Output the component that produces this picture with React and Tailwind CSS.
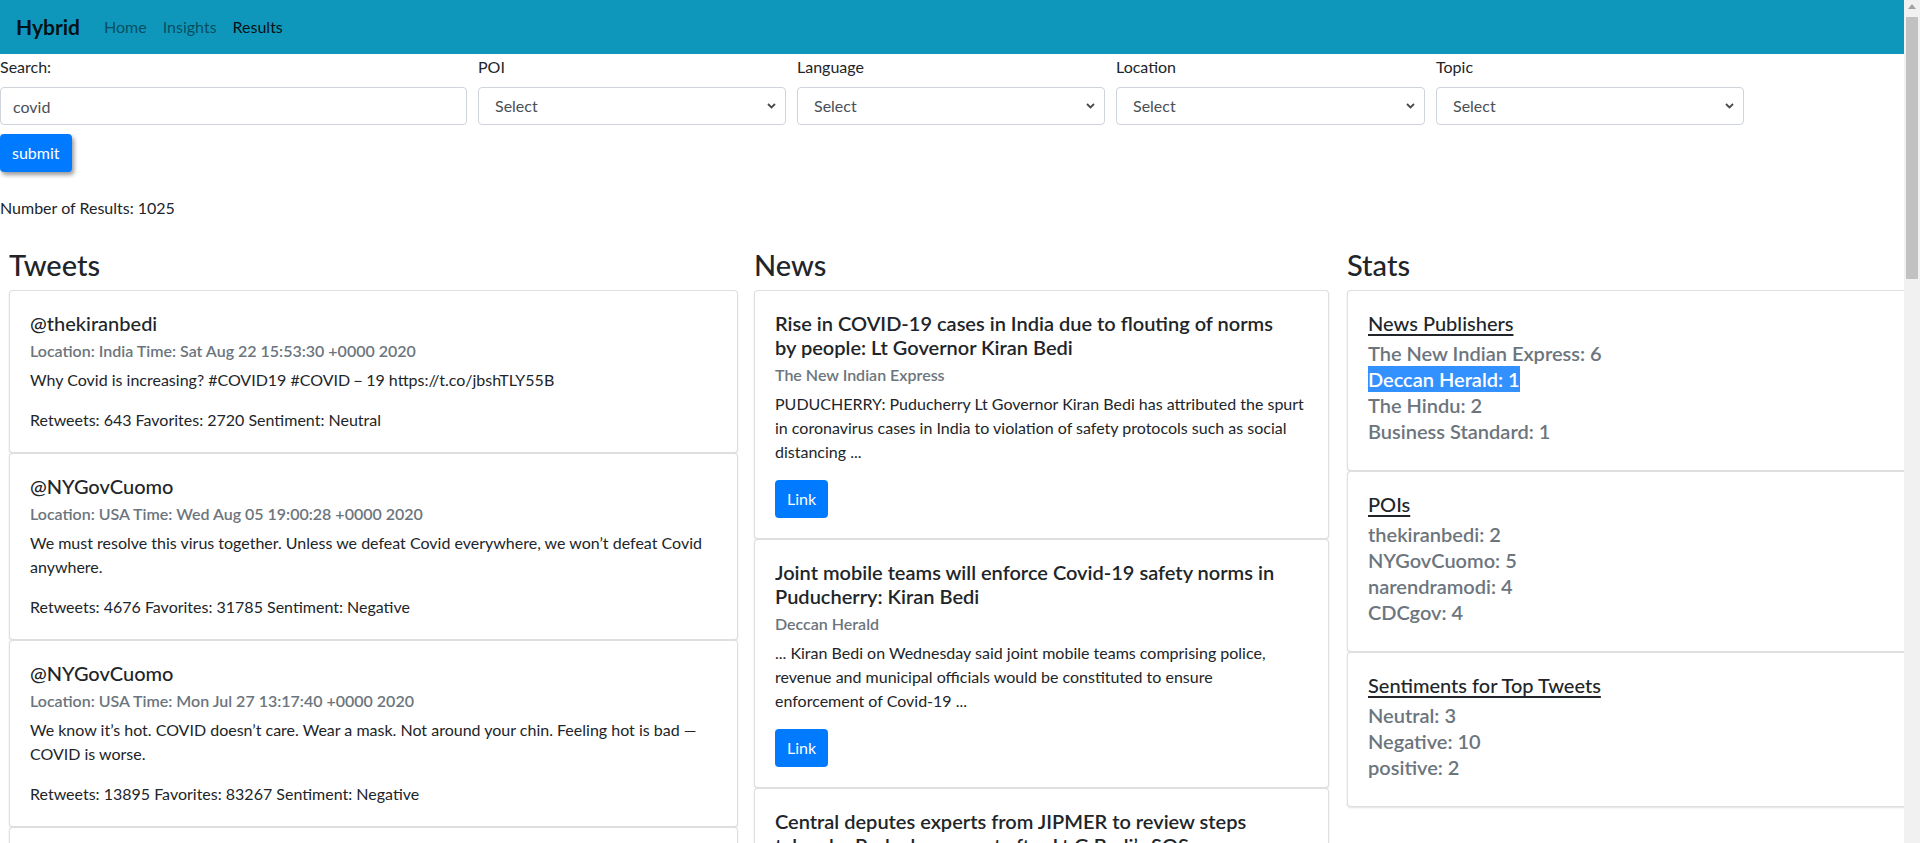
import React from 'react';

const tweets = [
  {
    user: '@thekiranbedi',
    meta: 'Location: India Time: Sat Aug 22 15:53:30 +0000 2020',
    lines: ['Why Covid is increasing? #COVID19 #COVID－19 https://t.co/jbshTLY55B'],
    stats: 'Retweets: 643 Favorites: 2720 Sentiment: Neutral',
  },
  {
    user: '@NYGovCuomo',
    meta: 'Location: USA Time: Wed Aug 05 19:00:28 +0000 2020',
    lines: ['We must resolve this virus together. Unless we defeat Covid everywhere, we won’t defeat Covid', 'anywhere.'],
    stats: 'Retweets: 4676 Favorites: 31785 Sentiment: Negative',
  },
  {
    user: '@NYGovCuomo',
    meta: 'Location: USA Time: Mon Jul 27 13:17:40 +0000 2020',
    lines: ['We know it’s hot. COVID doesn’t care. Wear a mask. Not around your chin. Feeling hot is bad —', 'COVID is worse.'],
    stats: 'Retweets: 13895 Favorites: 83267 Sentiment: Negative',
  },
  {
    user: '@narendramodi',
    meta: 'Location: India Time: Sun Aug 16 10:12:05 +0000 2020',
    lines: ['Stay safe, follow all the COVID-19 protocols.'],
    stats: 'Retweets: 5120 Favorites: 40211 Sentiment: positive',
  },
];

const news = [
  {
    title: ['Rise in COVID-19 cases in India due to flouting of norms', 'by people: Lt Governor Kiran Bedi'],
    source: 'The New Indian Express',
    body: [
      'PUDUCHERRY: Puducherry Lt Governor Kiran Bedi has attributed the spurt',
      'in coronavirus cases in India to violation of safety protocols such as social',
      'distancing ...',
    ],
  },
  {
    title: ['Joint mobile teams will enforce Covid-19 safety norms in', 'Puducherry: Kiran Bedi'],
    source: 'Deccan Herald',
    body: [
      '... Kiran Bedi on Wednesday said joint mobile teams comprising police,',
      'revenue and municipal officials would be constituted to ensure',
      'enforcement of Covid-19 ...',
    ],
  },
  {
    title: ['Central deputes experts from JIPMER to review steps', 'taken by Puducherry govt after Lt G Bedi’s SOS'],
    source: 'The Hindu',
    body: ['NEW DELHI: The Centre has deputed a team of experts from JIPMER to', 'review the measures taken to contain Covid-19 ...'],
  },
];

const stats = [
  {
    title: 'News Publishers',
    items: ['The New Indian Express: 6', 'Deccan Herald: 1', 'The Hindu: 2', 'Business Standard: 1'],
    selected: 1,
  },
  {
    title: 'POIs',
    items: ['thekiranbedi: 2', 'NYGovCuomo: 5', 'narendramodi: 4', 'CDCgov: 4'],
  },
  {
    title: 'Sentiments for Top Tweets',
    items: ['Neutral: 3', 'Negative: 10', 'positive: 2'],
  },
];

function Chevron() {
  return (
    <svg className="pointer-events-none absolute right-[10px] top-[16px]" width="9" height="6" viewBox="0 0 9 6">
      <path d="M1 1 L4.5 4.5 L8 1" fill="none" stroke="#4a4a4a" strokeWidth="1.8" />
    </svg>
  );
}

function SelectBox({ label, width }) {
  return (
    <div className={width}>
      <div className="h-[24px] leading-[24px] mb-2">{label}</div>
      <div className="relative">
        <select className="appearance-none w-full h-[38px] pl-4 pr-8 border border-[#ced4da] rounded-[4px] bg-white text-[#495057] outline-none">
          <option>Select</option>
        </select>
        <Chevron />
      </div>
    </div>
  );
}

function Card({ children, className = '' }) {
  return (
    <div className={`bg-white border border-[rgba(0,0,0,0.125)] rounded-[4px] shadow-[0_1px_2px_rgba(0,0,0,0.12)] ${className}`}>
      {children}
    </div>
  );
}

export default function App() {
  return (
    <div className="flex h-[843px] overflow-hidden bg-white text-[#212529] text-[16px] font-['Lato',sans-serif]">
      <div className="flex-1 min-w-0 overflow-hidden">
        {/* Navbar */}
        <nav className="h-[54px] bg-[#0e97bb] flex items-center px-4">
          <span className="text-[21px] font-bold text-[rgba(0,0,0,0.9)] mr-4">Hybrid</span>
          <a className="px-2 text-[rgba(0,0,0,0.5)]">Home</a>
          <a className="px-2 text-[rgba(0,0,0,0.5)]">Insights</a>
          <a className="px-2 text-[rgba(0,0,0,0.9)]">Results</a>
        </nav>

        {/* Filters */}
        <div className="pt-px">
          <div className="flex gap-[11px]">
            <div className="w-[467px]">
              <div className="h-[24px] leading-[24px] mb-2">Search:</div>
              <input
                defaultValue="covid"
                className="w-full h-[38px] px-3 border border-[#ced4da] rounded-[4px] text-[#495057] outline-none"
              />
            </div>
            <SelectBox label="POI" width="w-[308px]" />
            <SelectBox label="Language" width="w-[308px]" />
            <SelectBox label="Location" width="w-[309px]" />
            <SelectBox label="Topic" width="w-[308px]" />
          </div>
          <button className="mt-[9px] h-[38px] px-3 bg-[#007bff] text-white rounded-[4px] shadow-[2px_3px_4px_rgba(0,0,0,0.4)]">
            submit
          </button>
          <div className="mt-[24px] leading-[24px]">Number of Results: 1025</div>
        </div>

        {/* Results */}
        <div className="flex mt-[28px] pl-[9px]">
          <div className="w-[729px] shrink-0">
            <h3 className="text-[29px] font-medium leading-[34px] mb-2">Tweets</h3>
            {tweets.map((t, i) => (
              <Card key={i} className="p-5">
                <h5 className="text-[20px] font-medium leading-[24px] mb-[6px]">{t.user}</h5>
                <h6 className="font-semibold leading-[19px] text-[#6c757d] mb-2">{t.meta}</h6>
                <p className="leading-[24px] mb-4">
                  {t.lines.map((l, j) => (
                    <React.Fragment key={j}>
                      {j > 0 && <br />}
                      {l}
                    </React.Fragment>
                  ))}
                </p>
                <p className="leading-[24px]">{t.stats}</p>
              </Card>
            ))}
          </div>

          <div className="w-[575px] shrink-0 ml-4">
            <h3 className="text-[29px] font-medium leading-[34px] mb-2">News</h3>
            {news.map((n, i) => (
              <Card key={i} className="p-5">
                <h5 className="text-[20px] font-semibold leading-[24px] mb-[6px]">
                  {n.title[0]}
                  <br />
                  {n.title[1]}
                </h5>
                <h6 className="font-semibold leading-[19px] text-[#6c757d] mb-2">{n.source}</h6>
                <p className="leading-[24px] mb-4">
                  {n.body.map((l, j) => (
                    <React.Fragment key={j}>
                      {j > 0 && <br />}
                      {l}
                    </React.Fragment>
                  ))}
                </p>
                <button className="h-[38px] px-3 bg-[#007bff] text-white rounded-[4px]">Link</button>
              </Card>
            ))}
          </div>

          <div className="w-[575px] shrink-0 ml-[18px]">
            <h3 className="text-[29px] font-medium leading-[34px] mb-2">Stats</h3>
            {stats.map((s, i) => (
              <Card key={i} className="px-5 pt-5 pb-[26px]">
                <h5 className="text-[20px] font-medium leading-[24px] underline underline-offset-[3px] mb-[5px]">{s.title}</h5>
                {s.items.map((it, j) => (
                  <div key={j} className="text-[20px] font-semibold leading-[26px] text-[#6c757d]">
                    {s.selected === j ? (
                      <span className="inline-block bg-[#3390ff] text-white">{it}</span>
                    ) : (
                      it
                    )}
                  </div>
                ))}
              </Card>
            ))}
          </div>
        </div>
      </div>

      {/* Scrollbar */}
      <div className="w-[16px] shrink-0 bg-[#f1f1f1] flex flex-col items-center">
        <svg className="mt-[4px]" width="8" height="5" viewBox="0 0 8 5">
          <path d="M0 5 L4 0 L8 5 Z" fill="#a3a3a3" />
        </svg>
        <div className="mt-[8px] w-[12px] h-[262px] bg-[#c1c1c1]" />
      </div>
    </div>
  );
}
